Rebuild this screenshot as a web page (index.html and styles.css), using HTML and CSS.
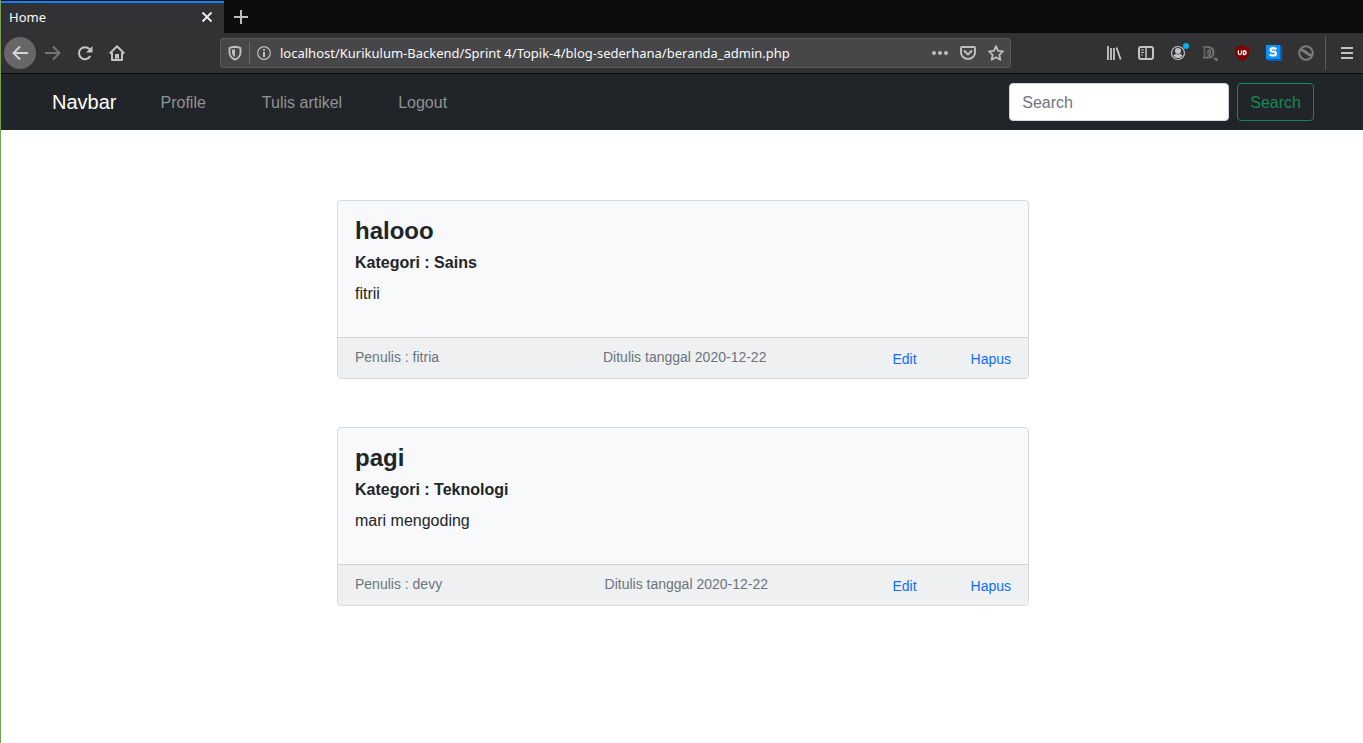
FILE: index.html
```html
<!DOCTYPE html>
<html lang="id">
<head>
<meta charset="utf-8">
<title>Home</title>
<link rel="stylesheet" href="styles.css">
</head>
<body>
<header class="browser">
  <div class="tabs">
    <div class="tab">
      <span>Home</span>
      <button class="tab-close" aria-label="Close tab"><svg width="12" height="12" viewBox="0 0 12 12"><path d="M1.5 1.5l9 9M10.500 1.500l-9 9" fill="none" stroke="#f0f0f0" stroke-width="1.800"/></svg></button>
    </div>
    <button class="tab-new" aria-label="New tab"><svg width="14" height="14" viewBox="0 0 14 14"><path d="M7 0v14M0 7h14" fill="none" stroke="#bdbdbe" stroke-width="2"/></svg></button>
  </div>
  <div class="toolbar">
    <div class="tools-left">
      <button class="back" aria-label="Back"><svg width="16" height="16" viewBox="0 0 16 16"><path d="M16 8H1.500M8 1.500L1.500 8L8 14.500" fill="none" stroke="#d5d5d6" stroke-width="2"/></svg></button>
      <button class="tool" aria-label="Forward"><svg width="16" height="16" viewBox="0 0 16 16"><path d="M0 8h14.500M8 1.500L14.500 8L8 14.500" fill="none" stroke="#747475" stroke-width="2"/></svg></button>
      <button class="tool" aria-label="Reload"><svg width="16" height="16" viewBox="0 0 16 16"><path d="M13.300 11A6 6 0 1 1 12.500 4.200" fill="none" stroke="#c4c4c5" stroke-width="2"/><path d="M15.500 1v6.500H9z" fill="#c4c4c5"/></svg></button>
      <button class="tool" aria-label="Home"><svg width="16" height="16" viewBox="0 0 16 16"><path d="M.8 8.500L8 1.300L15.200 8.500M3 7.500V15H13V7.500" fill="none" stroke="#c4c4c5" stroke-width="2" stroke-linejoin="round"/><path d="M6 15V9h4v6H8.800v-2H7.500v2z" fill="#c4c4c5"/></svg></button>
    </div>
    <div class="address">
      <svg width="14" height="16" viewBox="0 0 14 16"><path d="M7 1.800C9 2 11 2.300 12.500 3V7.500C12.300 11 10 13.500 7 14.500C4 13.500 1.700 11 1.500 7.500V3C3 2.300 5 2 7 1.800z" fill="none" stroke="#bebebf" stroke-width="1.900"/><path d="M7 4.200v7.800C5 11 4.200 9.500 4 7.500V4.800z" fill="#bebebf"/></svg>
      <span class="divider"></span>
      <svg width="14" height="14" viewBox="0 0 14 14"><circle cx="7" cy="7" r="6.300" fill="none" stroke="#bebebf" stroke-width="1.200"/><path d="M6 3h2v1.700H6zM6 6h2v5H6z" fill="#bebebf"/></svg>
      <input class="url" type="text" aria-label="Address" value="localhost/Kurikulum-Backend/Sprint 4/Topik-4/blog-sederhana/beranda_admin.php">
      <div class="page-actions">
        <svg width="16" height="16" viewBox="0 0 16 16" fill="#bebebf"><circle cx="2" cy="8" r="2"/><circle cx="8" cy="8" r="2"/><circle cx="14" cy="8" r="2"/></svg>
        <svg width="16" height="16" viewBox="0 0 16 16" fill="none" stroke="#bebebf" stroke-width="2"><path d="M2 2h12q1 0 1 1v4.500a7 6.500 0 0 1-14 0V3q0-1 1-1z"/><path d="M4.500 6L8 9.500L11.500 6" stroke-linecap="round" stroke-linejoin="round"/></svg>
        <svg width="16" height="16" viewBox="0 0 16 16"><path d="M8 1.200L10.100 5.800L15 6.400L11.400 9.800L12.300 14.800L8 12.300L3.700 14.800L4.600 9.800L1 6.400L5.900 5.800z" fill="none" stroke="#bebebf" stroke-width="1.800" stroke-linejoin="round"/></svg>
      </div>
    </div>
    <div class="tools-right">
      <svg width="16" height="16" viewBox="0 0 16 16"><path d="M2 1v14M5 3v12M8 3v12M10.500 2.500l4.200 12" fill="none" stroke="#c4c4c5" stroke-width="1.800"/></svg>
      <svg width="16" height="16" viewBox="0 0 16 16"><rect x="1" y="2" width="14" height="12" rx="2" fill="none" stroke="#c4c4c5" stroke-width="2"/><path d="M8 2v12" stroke="#c4c4c5" stroke-width="1.500"/><path d="M3 5h3M3 7.500h3M3 10h2" stroke="#c4c4c5"/></svg>
      <svg width="16" height="16" viewBox="0 0 16 16"><circle cx="8" cy="8" r="6.500" fill="none" stroke="#c4c4c5" stroke-width="1.200"/><circle cx="8" cy="6" r="3" fill="#c4c4c5"/><path d="M3.500 10.500Q5 8.500 6.500 9Q8 10 9.500 9Q11 8.500 12.500 10.500A5.200 5.200 0 0 1 3.500 10.500z" fill="#c4c4c5"/><circle cx="16" cy="1" r="3" fill="#00b3f4"/></svg>
      <svg width="16" height="16" viewBox="0 0 16 16"><path d="M.5 2H5M2.500 2.500V11M6 5v5.500" fill="none" stroke="#5e5e60" stroke-width="2"/><path d="M5 2q6.500 0 6.500 5.500T5.500 12.500H1" fill="none" stroke="#747476" stroke-width="2"/><path d="M7 4.500q3 3.500 0 6.500M11.500 13.500h1.500M14 12.500v2.500h2" fill="none" stroke="#858587" stroke-width="1.300"/></svg>
      <svg width="16" height="16" viewBox="0 0 16 16"><path d="M8 0Q11 2.200 15 2.200V8Q14.500 13 8 16Q1.500 13 1 8V2.200Q5 2.200 8 0z" fill="#800000"/><path d="M4.300 5.500V8Q4.300 9.500 6 9.500Q7.500 9.500 7.500 8V5.500M9.500 6h1q1.700 0 1.700 1.700T10.500 9.500h-1z" fill="none" stroke="#fff" stroke-width="1.300"/></svg>
      <svg width="16" height="16" viewBox="0 0 16 16"><path d="M0 0h14l2 2v14H2l-2-2z" fill="#0062b8"/><path d="M0 0h14v14H0z" fill="#0a91ff"/><path d="M10.300 4.300Q9 3.200 6.800 3.200Q4.500 3.200 4.500 4.900Q4.500 6.500 7 6.700Q10 7 10 8.700Q10 10.500 7 10.500Q5 10.500 3.600 9.300" fill="none" stroke="#fff" stroke-width="2.200"/></svg>
      <svg width="16" height="16" viewBox="0 0 16 16"><circle cx="8" cy="8" r="6.800" fill="none" stroke="#7c7c7d" stroke-width="2"/><path d="M2.500 5Q5 4.500 7.500 7T13.500 10.500" fill="none" stroke="#7c7c7d" stroke-width="3"/></svg>
    </div>
    <button class="menu" aria-label="Menu"><svg width="12" height="12" viewBox="0 0 12 12"><path d="M0 1h12M0 6h12M0 11h12" stroke="#c4c4c5" stroke-width="2"/></svg></button>
  </div>
</header>
<nav class="navbar">
  <a class="brand" href="#">Navbar</a>
  <div class="links"><a href="#">Profile</a><a href="#">Tulis artikel</a><a href="#">Logout</a></div>
  <form class="search">
    <input type="search" placeholder="Search" aria-label="Search">
    <button type="button">Search</button>
  </form>
</nav>
<main class="posts">
  <article class="card">
    <div class="card-body">
      <h1>halooo</h1>
      <h2>Kategori : Sains</h2>
      <p>fitrii</p>
    </div>
    <footer class="card-footer">
      <span>Penulis : fitria</span>
      <span class="date">Ditulis tanggal 2020-12-22</span>
      <div class="actions"><a href="#">Edit</a><a href="#">Hapus</a></div>
    </footer>
  </article>
  <article class="card">
    <div class="card-body">
      <h1>pagi</h1>
      <h2>Kategori : Teknologi</h2>
      <p>mari mengoding</p>
    </div>
    <footer class="card-footer">
      <span>Penulis : devy</span>
      <span class="date">Ditulis tanggal 2020-12-22</span>
      <div class="actions"><a href="#">Edit</a><a href="#">Hapus</a></div>
    </footer>
  </article>
</main>
</body>
</html>
```
FILE: styles.css
```css
* { box-sizing: border-box; }
html { height: 100%; }
body {
  margin: 0;
  min-height: 100%;
  border-left: 1px solid #7a9f55;
  background: #fff;
  color: #212529;
  font: 16px/24px "Liberation Sans", Arial, sans-serif;
}
button, input { font: inherit; margin: 0; }
svg { display: block; flex: none; overflow: visible; }
a { text-decoration: none; }

.browser { font-family: "Noto Sans", sans-serif; font-size: 13px; }
.browser button { border: 0; padding: 0; background: none; display: grid; place-items: center; }
.tabs { display: flex; height: 33px; padding-top: 1px; background: #0c0c0d; }
.tab {
  display: flex;
  align-items: center;
  justify-content: space-between;
  width: 223px;
  padding: 0 11px 2px 8px;
  border-top: 2px solid #0a84ff;
  background: #323234;
  color: #f9f9fa;
}
.tab-new { width: 34px; }
.toolbar {
  display: flex;
  align-items: center;
  height: 41px;
  background: #323234;
  border-bottom: 1px solid #0c0c0d;
}
.tools-left { display: flex; align-items: center; width: 219px; padding-left: 3px; }
.browser .tool { width: 32px; height: 32px; }
.browser .back { width: 32px; height: 32px; border-radius: 50%; background: #676768; }
.tools-left .tool:nth-child(2) { margin-left: 1px; }
.address {
  display: flex;
  align-items: center;
  flex: 1;
  max-width: 791px;
  height: 30px;
  padding: 0 6px 0 7px;
  border: 1px solid #5a5a5c;
  border-radius: 3px;
  background: #474749;
}
.divider { width: 1px; height: 22px; margin: 0 7px; background: #69696b; }
.url {
  flex: 1;
  min-width: 0;
  margin-left: 9px;
  padding: 0;
  border: 0;
  outline: 0;
  background: none;
  color: #f9f9fa;
}
.page-actions { display: flex; gap: 12px; }
.tools-right { display: flex; align-items: center; gap: 16px; margin-left: auto; }
.browser .menu { width: 38px; height: 34px; padding-left: 5px; margin-left: 11px; border-left: 1px solid #5c5c5e; }

.navbar {
  display: flex;
  align-items: center;
  padding: 9px 49px 9px 51px;
  background: #212529;
}
.brand { color: #fff; font-size: 20px; }
.links { display: flex; gap: 56px; margin-left: 44px; padding-top: 2px; }
.links a { color: #909294; }
.search { display: flex; gap: 8px; margin-left: auto; }
.search input {
  width: 220px;
  height: 38px;
  padding: 7px 12px 5px;
  border: 1px solid #ced4da;
  border-radius: 4px;
  background: #fff;
}
.search input::placeholder { color: #6c757d; opacity: 1; }
.search button {
  padding: 7px 12px 5px;
  height: 38px;
  border: 1px solid #198754;
  border-radius: 4px;
  background: none;
  color: #198754;
}

.posts { display: grid; gap: 48px; justify-content: center; grid-template-columns: minmax(0, 692px); padding: 70px 24px 48px 26px; }
.card { border: 1px solid #d8dadc; border-radius: 4px; background: #f8f9fa; overflow: hidden; }
.card-body { padding: 16px 17px 30px; }
h1, h2, p { margin: 0; }
h1 { font-size: 24px; line-height: 28px; margin-bottom: 8px; }
h2 { font-size: 16px; line-height: 20px; margin-bottom: 8px; }
p { line-height: 26px; }
.card-footer {
  display: flex;
  justify-content: space-between;
  align-items: flex-start;
  padding: 9px 17px 8px;
  border-top: 1px solid #d0d2d4;
  background: #eff0f1;
  color: #6c757d;
  font-size: 14px;
  line-height: 21px;
}
.date { margin-left: 38px; }
.actions { display: flex; gap: 54px; padding-top: 1px; line-height: 22px; }
.actions a { color: #0d6efd; }
```
